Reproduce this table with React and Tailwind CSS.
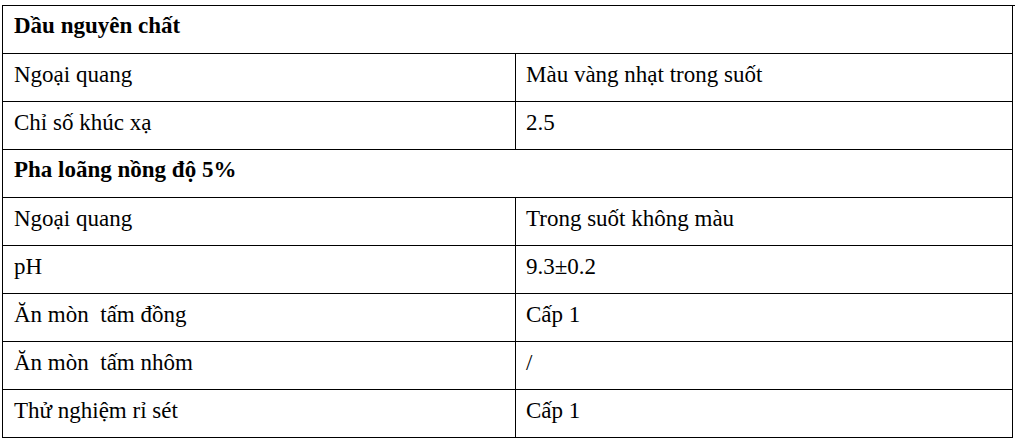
const rows = [
  { head: "Dầu nguyên chất" },
  { label: "Ngoại quang", value: "Màu vàng nhạt trong suốt" },
  { label: "Chỉ số khúc xạ", value: "2.5" },
  { head: "Pha loãng nồng độ 5%" },
  { label: "Ngoại quang", value: "Trong suốt không màu" },
  { label: "pH", value: "9.3±0.2" },
  { label: "Ăn mòn  tấm đồng", value: "Cấp 1" },
  { label: "Ăn mòn  tấm nhôm", value: "/" },
  { label: "Thử nghiệm rỉ sét", value: "Cấp 1" },
];

export default function App() {
  return (
    <div className="w-[1015px] h-[440px] bg-white pl-[2px] pt-[5px] [font-family:Liberation_Serif,serif] text-[23px] text-black">
      <div className="grid grid-cols-[513px_497px] border-l border-t border-black">
        {rows.map((r, i) =>
          r.head ? (
            <div
              key={i}
              className="col-span-2 h-[48px] flex items-center pl-[11px] pb-[6px] font-bold border-r border-b border-black whitespace-pre"
            >
              {r.head}
            </div>
          ) : (
            [
              <div
                key={i + "a"}
                className="h-[48px] flex items-center pl-[11px] pb-[5px] border-r border-b border-black whitespace-pre"
              >
                {r.label}
              </div>,
              <div
                key={i + "b"}
                className="h-[48px] flex items-center pl-[10px] pb-[5px] border-r border-b border-black whitespace-pre"
              >
                {r.value}
              </div>,
            ]
          )
        )}
      </div>
    </div>
  );
}
